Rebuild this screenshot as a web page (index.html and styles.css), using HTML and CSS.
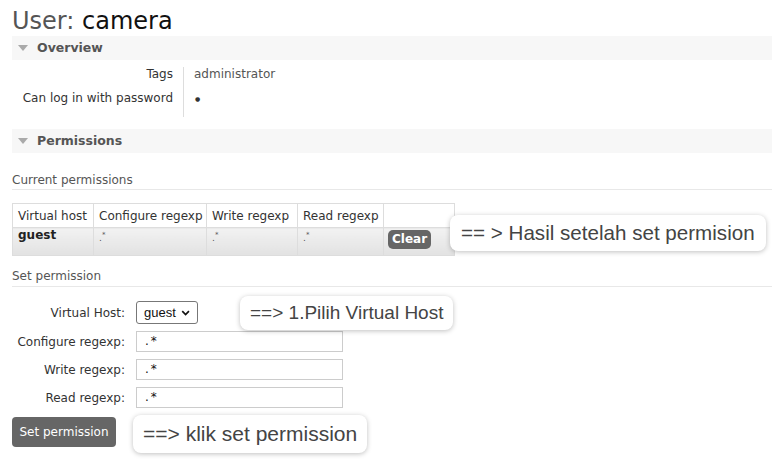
FILE: index.html
```html
<!DOCTYPE html>
<html>
<head>
<meta charset="utf-8">
<link rel="stylesheet" href="styles.css">
</head>
<body>
<div class="page">
  <h1 class="title"><span class="title-key">User:</span> camera</h1>

  <div class="section-bar"><span class="tri"></span>Overview</div>
  <table class="facts">
    <tr><th>Tags</th><td>administrator</td></tr>
    <tr><th>Can log in with password</th><td><span class="dot">&#9679;</span></td></tr>
    <tr class="spacer"><th></th><td></td></tr>
  </table>

  <div class="section-bar"><span class="tri"></span>Permissions</div>

  <h3 class="subhead">Current permissions</h3>
  <div class="perm-wrap">
    <table class="perms">
      <colgroup>
        <col class="c1"><col class="c2"><col class="c3"><col class="c4"><col class="c5">
      </colgroup>
      <tr class="head">
        <th>Virtual host</th>
        <th>Configure regexp</th>
        <th>Write regexp</th>
        <th>Read regexp</th>
        <th></th>
      </tr>
      <tr class="row">
        <td class="vh">guest</td>
        <td><span class="rx">.<sup>*</sup></span></td>
        <td><span class="rx">.<sup>*</sup></span></td>
        <td><span class="rx">.<sup>*</sup></span></td>
        <td class="act"><button class="btn-clear">Clear</button></td>
      </tr>
    </table>
    <div class="callout callout-1">== &gt; Hasil setelah set permision</div>
  </div>

  <h3 class="subhead subhead-2">Set permission</h3>
  <div class="form-wrap">
    <table class="form">
      <tr class="vh-row">
        <th>Virtual Host:</th>
        <td><span class="select">guest <svg width="11" height="8" viewBox="0 0 11 8"><path d="M1.5 1.8 L5.5 5.8 L9.5 1.8" fill="none" stroke="#111" stroke-width="2"/></svg></span></td>
      </tr>
      <tr><th>Configure regexp:</th><td><span class="input">.*</span></td></tr>
      <tr><th>Write regexp:</th><td><span class="input">.*</span></td></tr>
      <tr><th>Read regexp:</th><td><span class="input">.*</span></td></tr>
    </table>
    <button class="btn-set">Set permission</button>
    <div class="callout callout-2">==&gt; 1.Pilih Virtual Host</div>
    <div class="callout callout-3">==&gt; klik set permission</div>
  </div>
</div>
</body>
</html>
```

FILE: styles.css
```css
html, body {
  margin: 0;
  padding: 0;
  background: #fff;
}
body {
  font-family: "DejaVu Sans", Verdana, sans-serif;
  font-size: 12px;
  color: #484848;
}
.page {
  padding: 0 1px 0 12px;
  width: 760px;
}
.title {
  margin: 0;
  padding-top: 7px;
  font-size: 24px;
  font-weight: normal;
  line-height: 28px;
  color: #111;
  height: 29px;
}
.title-key {
  color: #555;
}
.section-bar {
  height: 24px;
  line-height: 24px;
  background: #f7f7f7;
  font-weight: bold;
  font-size: 12.5px;
  color: #555;
  display: flex;
  align-items: center;
}
.tri {
  width: 0;
  height: 0;
  border-left: 5.5px solid transparent;
  border-right: 5.5px solid transparent;
  border-top: 6px solid #aaa;
  margin: 0 9px 0 6px;
}
.facts {
  border-collapse: collapse;
  margin-top: 7px;
  margin-bottom: 12px;
}
.facts th {
  font-weight: normal;
  text-align: right;
  color: #333;
  padding: 0 10px;
  height: 24px;
  width: 151px;
  border-right: 1px solid #ddd;
  white-space: nowrap;
  vertical-align: top;
  line-height: 14px;
}
.facts td {
  padding: 0 10px;
  color: #555;
  vertical-align: top;
  line-height: 14px;
}
.facts .spacer th, .facts .spacer td {
  height: 2px;
}
.dot {
  font-size: 6px;
  color: #333;
  position: relative;
  top: -1px;
  left: 1px;
}
.subhead {
  margin: 0;
  font-size: 12px;
  font-weight: normal;
  color: #555;
  padding-top: 20px;
  padding-bottom: 2px;
  border-bottom: 1px solid #e8e8e8;
}
.perm-wrap {
  position: relative;
  padding-top: 13px;
}
.perms {
  border-collapse: collapse;
  border: 1px solid #ddd;
  table-layout: fixed;
  width: 442px;
}
.perms .c1 { width: 81px; }
.perms .c2 { width: 113px; }
.perms .c3 { width: 91px; }
.perms .c4 { width: 86px; }
.perms .c5 { width: 71px; }
.perms th {
  font-weight: normal;
  color: #333;
  text-align: left;
  padding: 0 5px;
  height: 23px;
  border: 1px solid #ddd;
  white-space: nowrap;
  overflow: hidden;
}
.perms .row td {
  height: 28px;
  padding: 0 5px;
  border: 1px solid #ddd;
  background: linear-gradient(#f2f2f2, #e2e2e2);
  vertical-align: top;
  box-sizing: border-box;
}
.perms .vh {
  font-weight: bold;
  color: #222;
  padding-top: 2px;
  line-height: 15px;
}
.rx {
  display: inline-block;
  font-size: 9px;
  color: #555;
  line-height: 10px;
  padding-top: 2px;
}
.rx sup {
  font-size: 7px;
}
.perms .row td.act {
  padding: 2px 4px 0;
}
.btn-clear {
  font-family: "DejaVu Sans", Verdana, sans-serif;
  font-weight: bold;
  font-size: 12px;
  color: #fff;
  background: #666;
  border: none;
  border-radius: 5px;
  padding: 0 4px;
  height: 19px;
  line-height: 19px;
}
.callout {
  position: absolute;
  background: #fff;
  border-radius: 8px;
  box-shadow: 0 1px 5px rgba(0,0,0,0.25);
  font-family: "Liberation Sans", Arial, sans-serif;
  color: #444;
  white-space: nowrap;
  padding: 0 10px;
}
.callout-1 {
  left: 438px;
  top: 25px;
  height: 36px;
  line-height: 36px;
  font-size: 20.6px;
  padding: 0 11px;
}
.subhead-2 {
  padding-top: 13px;
  padding-bottom: 3px;
}
.form-wrap {
  position: relative;
  padding-top: 14px;
  padding-bottom: 20px;
}
.form {
  border-collapse: collapse;
}
.form th {
  font-weight: normal;
  text-align: right;
  color: #333;
  width: 124px;
  padding: 4px 11px 0 0;
  height: 28px;
  box-sizing: border-box;
  white-space: nowrap;
  vertical-align: top;
  line-height: 14px;
}
.form td {
  padding: 0;
  height: 28px;
  vertical-align: top;
}
.form .vh-row th {
  height: 30px;
  padding-top: 5px;
}
.select {
  display: inline-flex;
  align-items: center;
  gap: 5px;
  box-sizing: border-box;
  height: 23px;
  width: 62px;
  padding: 0 7px;
  border: 1px solid #777;
  border-radius: 3px;
  font-family: "Liberation Sans", Arial, sans-serif;
  font-size: 13px;
  color: #111;
}
.input {
  display: block;
  box-sizing: border-box;
  width: 207px;
  height: 21px;
  line-height: 19px;
  border: 1px solid #ccc;
  padding: 0 8px;
  font-size: 12px;
  color: #111;
  letter-spacing: 2px;
}
.btn-set {
  display: block;
  margin-top: 2px;
  font-family: "DejaVu Sans", Verdana, sans-serif;
  font-size: 12px;
  color: #fff;
  background: #666;
  border: none;
  border-radius: 4px;
  width: 104px;
  height: 30px;
  padding: 0;
}
.callout-2 {
  left: 228px;
  top: 9px;
  height: 34px;
  line-height: 34px;
  font-size: 19px;
}
.callout-3 {
  left: 121px;
  top: 128px;
  height: 38px;
  line-height: 38px;
  font-size: 21px;
}
```
